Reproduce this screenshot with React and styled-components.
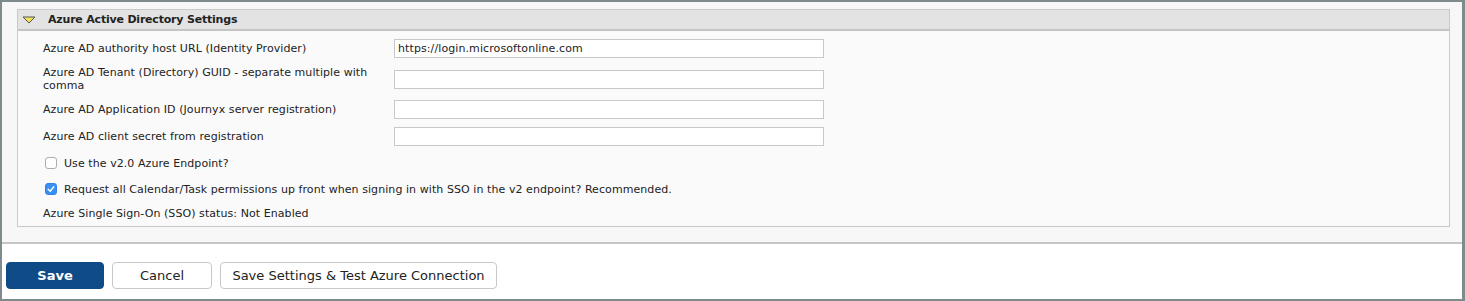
import React from "react";
import styled, { createGlobalStyle } from "styled-components";

const Global = createGlobalStyle`
  html, body { margin: 0; padding: 0; background: #ffffff; }
  body { font-family: Verdana, "DejaVu Sans", sans-serif; color: #222; }
`;

const Frame = styled.div`
  width: 1465px;
  height: 301px;
  box-sizing: border-box;
  border-style: solid;
  border-color: #7e8a8c;
  border-width: 2px 3px 2px 2px;
  display: flex;
  flex-direction: column;
  background: #ffffff;
`;

const Upper = styled.div`
  background: #f7f7f7;
  border-bottom: 2px solid #c6c6c6;
  padding: 7px 12px 15px 15px;
`;

const Panel = styled.section`
  border: 1px solid #c9c9c9;
  background: #fafafa;
`;

const PanelHeader = styled.div`
  height: 19px;
  background: #e3e3e3;
  border-bottom: 2px solid #c4c4c4;
  display: flex;
  align-items: center;
  padding-left: 4px;
  gap: 12px;
`;

const Title = styled.span`
  font-size: 11px;
  font-weight: bold;
  color: #222;
  letter-spacing: -0.2px;
`;

const Body = styled.div`
  padding: 4px 0 2px 25px;
  font-size: 11px;
  letter-spacing: 0.07px;
`;

const FieldRow = styled.div`
  display: grid;
  grid-template-columns: 351px 430px;
  align-items: center;
  height: ${(p) => (p.$tall ? 34 : 27)}px;
`;

const Label = styled.label`
  font-size: 11px;
  line-height: 13px;
  color: #222;
  padding-right: 16px;
`;

const TextInput = styled.input`
  box-sizing: border-box;
  width: 430px;
  height: 19px;
  margin: 0;
  border: 1px solid #c8c8c8;
  background: #ffffff;
  font-family: Verdana, "DejaVu Sans", sans-serif;
  font-size: 11px;
  letter-spacing: 0.1px;
  color: #222;
  padding: 0 3px;
  outline: none;
`;

const CheckRow = styled.div`
  display: flex;
  align-items: center;
  height: 26px;
  gap: 7px;
  padding-left: 2px;
  font-size: 11px;
`;

const Box = styled.span`
  box-sizing: border-box;
  width: 12px;
  height: 12px;
  border-radius: 3px;
  border: 1px solid ${(p) => (p.$checked ? "#2f84e8" : "#aeaeae")};
  background: ${(p) => (p.$checked ? "#3b8ff0" : "#ffffff")};
  display: flex;
  align-items: center;
  justify-content: center;
`;

const Status = styled.div`
  height: 22px;
  display: flex;
  align-items: center;
  font-size: 11px;
`;

const Footer = styled.div`
  flex: 1;
  display: flex;
  align-items: flex-start;
  gap: 8px;
  padding: 18px 0 0 4px;
`;

const Button = styled.button`
  box-sizing: border-box;
  height: 27px;
  width: ${(p) => p.$w}px;
  border-radius: 4px;
  border: 1px solid ${(p) => (p.$primary ? "#0d4a86" : "#c8c8c8")};
  background: ${(p) => (p.$primary ? "#0e4b87" : "#ffffff")};
  color: ${(p) => (p.$primary ? "#ffffff" : "#222")};
  font-family: Verdana, "DejaVu Sans", sans-serif;
  font-size: 13px;
  font-weight: ${(p) => (p.$primary ? "bold" : "normal")};
  padding: 0;
  cursor: pointer;
`;

const Triangle = () => (
  <svg width="14" height="8" viewBox="0 0 14 8">
    <polygon points="1,1 13,1 7,7" fill="#f3e25c" stroke="#555" strokeWidth="1" strokeLinejoin="miter" />
  </svg>
);

const Check = () => (
  <svg width="8" height="8" viewBox="0 0 8 8">
    <path d="M1.2 4.3 L3.2 6.2 L6.8 1.8" fill="none" stroke="#fff" strokeWidth="1.4" strokeLinecap="round" strokeLinejoin="round" />
  </svg>
);

const fields = [
  { label: "Azure AD authority host URL (Identity Provider)", value: "https://login.microsoftonline.com" },
  { label: "Azure AD Tenant (Directory) GUID - separate multiple with comma", value: "", tall: true },
  { label: "Azure AD Application ID (Journyx server registration)", value: "" },
  { label: "Azure AD client secret from registration", value: "" },
];

export default function App() {
  return (
    <>
      <Global />
      <Frame>
        <Upper>
          <Panel>
            <PanelHeader>
              <Triangle />
              <Title>Azure Active Directory Settings</Title>
            </PanelHeader>
            <Body>
              {fields.map((f) => (
                <FieldRow key={f.label} $tall={f.tall}>
                  <Label>{f.label}</Label>
                  <TextInput defaultValue={f.value} />
                </FieldRow>
              ))}
              <CheckRow>
                <Box />
                <span>Use the v2.0 Azure Endpoint?</span>
              </CheckRow>
              <CheckRow>
                <Box $checked>
                  <Check />
                </Box>
                <span>Request all Calendar/Task permissions up front when signing in with SSO in the v2 endpoint? Recommended.</span>
              </CheckRow>
              <Status>Azure Single Sign-On (SSO) status: Not Enabled</Status>
            </Body>
          </Panel>
        </Upper>
        <Footer>
          <Button $primary $w={98}>Save</Button>
          <Button $w={100}>Cancel</Button>
          <Button $w={277}>Save Settings &amp; Test Azure Connection</Button>
        </Footer>
      </Frame>
    </>
  );
}
